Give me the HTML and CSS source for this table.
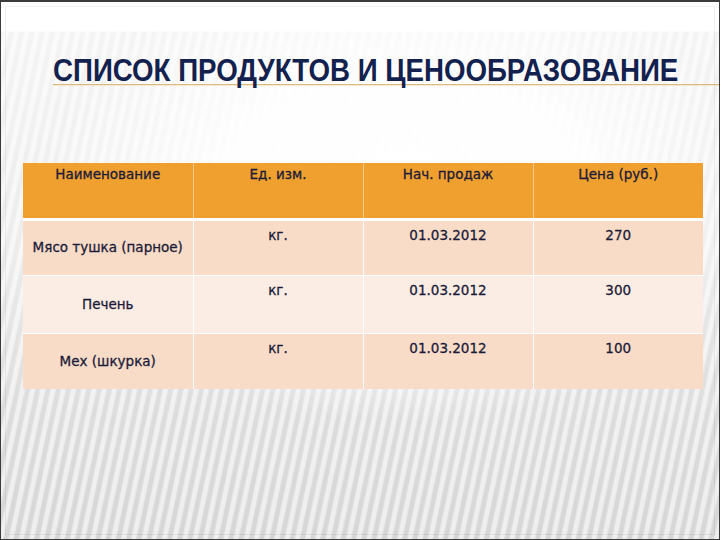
FILE: index.html
```html
<!DOCTYPE html>
<html lang="ru">
<head>
<meta charset="utf-8">
<title>Список продуктов и ценообразование</title>
<link rel="stylesheet" href="styles.css">
</head>
<body>
<div class="slide">
  <h1 class="title"><span class="title-text">СПИСОК ПРОДУКТОВ И ЦЕНООБРАЗОВАНИЕ</span></h1>
  <table class="prices">
    <colgroup>
      <col class="c"><col class="c"><col class="c"><col class="c">
    </colgroup>
    <thead>
      <tr>
        <th>Наименование</th>
        <th>Ед. изм.</th>
        <th>Нач. продаж</th>
        <th>Цена (руб.)</th>
      </tr>
    </thead>
    <tbody>
      <tr class="row-a r1">
        <td class="name">Мясо тушка (парное)</td>
        <td>кг.</td>
        <td>01.03.2012</td>
        <td>270</td>
      </tr>
      <tr class="row-b r2">
        <td class="name">Печень</td>
        <td>кг.</td>
        <td>01.03.2012</td>
        <td>300</td>
      </tr>
      <tr class="row-a r3">
        <td class="name">Мех (шкурка)</td>
        <td>кг.</td>
        <td>01.03.2012</td>
        <td>100</td>
      </tr>
    </tbody>
  </table>
</div>
</body>
</html>
```

FILE: styles.css
```css
html, body {
  margin: 0;
  padding: 0;
}

body {
  width: 720px;
  height: 540px;
  overflow: hidden;
}

.slide {
  position: relative;
  box-sizing: border-box;
  width: 720px;
  height: 540px;
  border: 1px solid #3a3a3a;
  border-top-width: 2px;
  overflow: hidden;
  background:
    linear-gradient(to bottom, #ffffff 0, #ffffff 29px, rgba(255,255,255,0) 30px),
    radial-gradient(ellipse 360px 230px at 400px 190px, rgba(255,255,255,1) 0, rgba(255,255,255,0.9) 50%, rgba(255,255,255,0) 100%),
    repeating-linear-gradient(102deg, rgba(255,255,255,0.6) 0 3px, rgba(255,255,255,0) 5px 8px, rgba(255,255,255,0.6) 10px),
    linear-gradient(to bottom, #f4f4f4 30px, #ececec 250px, #dcdcdc 420px, #d6d6d6 540px);
}

.slide::after {
  content: "";
  position: absolute;
  left: 4px;
  top: 4px;
  right: 4px;
  bottom: 4px;
  border: 1px solid rgba(0, 0, 0, 0.06);
  pointer-events: none;
}

.title {
  margin: 52px 0 0 52px;
  height: 30px;
  border-bottom: 1px solid #dcb97e;
  box-shadow: 0 1px 0 rgba(240, 215, 170, 0.5);
  font-family: "Liberation Sans", Arial, sans-serif;
  font-weight: bold;
  font-size: 32px;
  line-height: 32px;
  color: #13214e;
  white-space: nowrap;
}

.title-text {
  display: inline-block;
  transform: scaleX(0.865);
  transform-origin: left center;
}

.prices {
  margin: 78px 0 0 22px;
  width: 680px;
  table-layout: fixed;
  border-collapse: collapse;
  font-family: "DejaVu Sans", Verdana, sans-serif;
  font-size: 13.5px;
  line-height: 17px;
  color: #1c1c3a;
  -webkit-text-stroke: 0.3px #1c1c3a;
}

.prices .c {
  width: 170px;
}

.prices th {
  height: 56px;
  box-sizing: border-box;
  padding: 3px 4px 0;
  vertical-align: top;
  text-align: center;
  font-weight: normal;
  background: #f0a02e;
  border-left: 1px solid #f6c98a;
  border-bottom: 3px solid #ffffff;
}

.prices th:first-child {
  border-left: none;
}

.prices td {
  box-sizing: border-box;
  padding: 6px 4px 0;
  vertical-align: top;
  text-align: center;
  border-left: 1px solid #ffffff;
  border-top: 1px solid #ffffff;
}

.prices .r1 td { height: 56px; }
.prices .r2 td { height: 58px; }
.prices .r3 td { height: 56px; }

.prices td:first-child {
  border-left: none;
}

.prices td.name {
  vertical-align: middle;
  padding-top: 0;
}

.row-a td {
  background: #f9dcc7;
}

.row-b td {
  background: #fcede4;
}

.prices tbody tr:first-child td {
  border-top: none;
}
```
